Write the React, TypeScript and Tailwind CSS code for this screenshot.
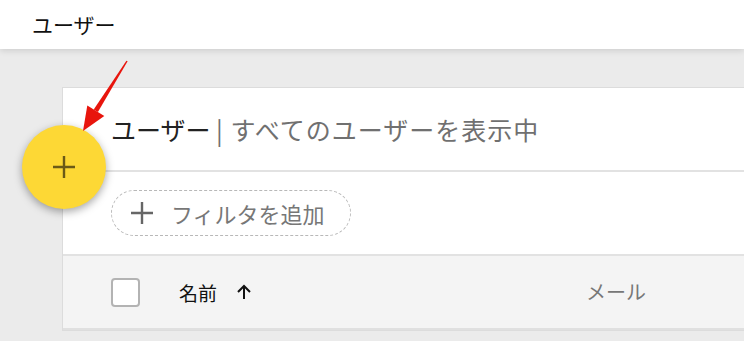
import React from "react";

const font = { fontFamily: '"Noto Sans CJK JP", "Noto Sans", sans-serif' };

function PlusIcon({ className }: { className?: string }) {
  return (
    <svg viewBox="0 0 22 22" className={className} fill="none" stroke="currentColor" strokeWidth="2.4">
      <path d="M11 0v22M0 11h22" />
    </svg>
  );
}

export default function App() {
  return (
    <div
      className="relative h-[341px] w-[744px] overflow-hidden bg-[#ebebeb] font-['Noto_Sans_CJK_JP',sans-serif]"
      style={font}
    >
      {/* Top bar */}
      <div className="relative z-10 flex h-[49px] items-center bg-white pl-[32px] shadow-[0_2px_6px_rgba(0,0,0,0.12)]">
        <span className="text-[21px] leading-none text-[#111]">ユーザー</span>
      </div>

      {/* Content */}
      <div className="pl-[62px] pt-[38px]">
        <div className="w-[760px] border border-[#dcdcdc] bg-white">
          <div className="flex h-[84px] items-center border-b-2 border-[#e2e2e2] pl-[48px] text-[25px] leading-none">
            <span className="text-[#222]">ユーザー</span>
            <span className="text-[#707070]">&nbsp;|&nbsp;</span>
            <span className="ml-[2px] tracking-[1px] text-[#707070]">すべてのユーザーを表示中</span>
          </div>
          <div className="flex h-[84px] items-center border-b-2 border-[#e2e2e2] pl-[48px]">
            <div className="flex h-[46px] w-[240px] items-center rounded-full border border-dashed border-[#b8b8b8] pl-[19px]">
              <PlusIcon className="h-[22px] w-[22px] text-[#666]" />
              <span className="ml-[18px] text-[22px] leading-none text-[#777]">フィルタを追加</span>
            </div>
          </div>
          <div className="flex h-[74px] items-center border-b-2 border-[#e0e0e0] bg-[#f4f4f4] pl-[48px]">
            <div className="h-[29px] w-[29px] rounded-[4px] border-2 border-[#b3b3b3] bg-white" />
            <span className="ml-[39px] text-[19px] leading-none text-[#111]">名前</span>
            <svg viewBox="0 0 16 16" className="ml-[19px] h-[16px] w-[16px] text-[#111]" fill="none" stroke="currentColor" strokeWidth="2">
              <path d="M8 15V2M2 8l6-6 6 6" />
            </svg>
            <span className="ml-[334px] text-[20px] leading-none text-[#777]">メール</span>
          </div>
        </div>
      </div>

      {/* FAB */}
      <button className="absolute left-[22px] top-[125px] z-20 flex h-[84px] w-[84px] items-center justify-center rounded-full bg-[#fdd835] shadow-[0_3px_8px_rgba(0,0,0,0.35)]">
        <PlusIcon className="h-[22px] w-[22px] text-[#6b5a17]" />
      </button>

      {/* Annotation arrow */}
      <svg className="pointer-events-none absolute left-0 top-0 z-30" width="744" height="341" viewBox="0 0 744 341">
        <polygon points="127.6,61.3 126.4,60.7 93.7,109.4 97.9,112" fill="#e8150d" />
        <polygon points="83,131 87.3,105.4 104.3,116" fill="#e8150d" />
      </svg>
    </div>
  );
}
